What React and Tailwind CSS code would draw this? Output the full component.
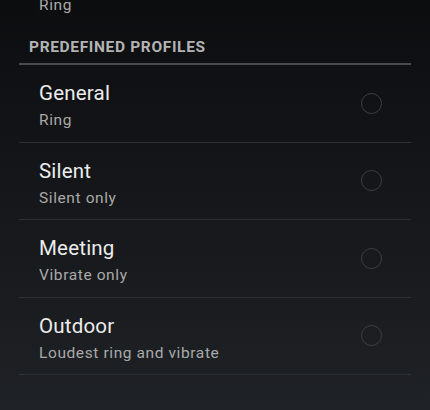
import React from "react";

const profiles = [
  { name: "General", desc: "Ring" },
  { name: "Silent", desc: "Silent only" },
  { name: "Meeting", desc: "Vibrate only" },
  { name: "Outdoor", desc: "Loudest ring and vibrate" },
];

const ProfileRow = ({ name, desc }) => (
  <div className="h-[77.5px] mx-[19px] border-b border-[#2d3034] flex items-start justify-between pl-[20px] pr-[29px]">
    <div className="flex flex-col pt-[15px]">
      <span className="text-[20.5px] leading-[27px] tracking-[0.2px] text-[#ececec]">
        {name}
      </span>
      <span className="text-[15.5px] leading-[24px] mt-[1px] tracking-[0.6px] text-[#a9a9a9]">
        {desc}
      </span>
    </div>
    <div className="self-center w-[21px] h-[21px] rounded-full border-[1.5px] border-[#3d3f42]" />
  </div>
);

const App = () => {
  return (
    <div
      className="w-[430px] h-[410px] overflow-hidden flex flex-col bg-gradient-to-b from-[#0c0d0f] to-[#1f2226]"
      style={{ fontFamily: "Roboto, 'Noto Sans', sans-serif" }}
    >
      {/* tail of previous row */}
      <div className="-mt-[5px] pl-[39px] text-[15.5px] leading-[20px] tracking-[0.6px] text-[#a9a9a9]">
        Ring
      </div>

      {/* Category header */}
      <div className="mt-[22px] pl-[29px] text-[15.5px] leading-[20px] font-bold tracking-[0.65px] text-[#b3b3b3]">
        PREDEFINED PROFILES
      </div>
      <div className="mt-[6px] mx-[19px] h-[2px] bg-[#4a4b4e]" />

      {profiles.map((p) => (
        <ProfileRow key={p.name} name={p.name} desc={p.desc} />
      ))}
    </div>
  );
};

export default App;
